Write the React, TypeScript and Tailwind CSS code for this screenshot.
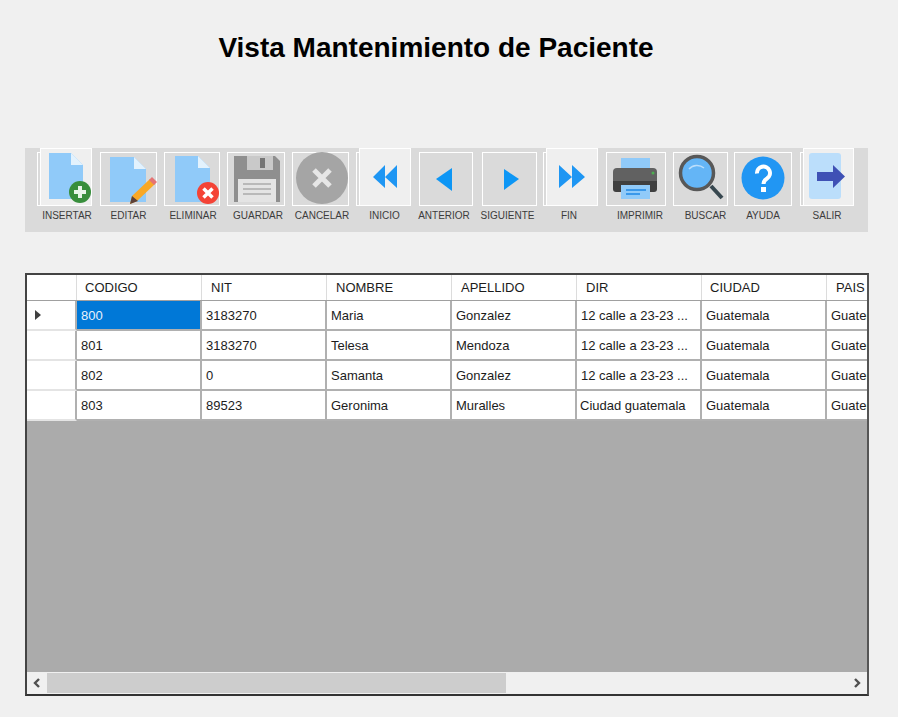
import type { ReactNode } from "react";

type Tool = {
  label: string;
  className: string; // width + gap to the previous button
  view: string; // svg viewBox, same size as the box
  labelClass: string;
  raised?: boolean;
  icon: ReactNode;
};

const DOC_BLUE = "#90caf9";
const FOLD = "#e3f2fd";
const ARROW_BLUE = "#1e96f3";

function Doc({ x, y, w, h }: { x: number; y: number; w: number; h: number }) {
  return (
    <>
      <path d={`M${x} ${y}H${x + w - 12}L${x + w} ${y + 12}V${y + h}H${x}Z`} fill={DOC_BLUE} />
      <path d={`M${x + w - 12} ${y}L${x + w} ${y + 12}H${x + w - 12}Z`} fill={FOLD} />
    </>
  );
}

const TOOLS: Tool[] = [
  {
    label: "INSERTAR",
    className: "w-[55px] ml-[12px]",
    view: "37 152 55 54",
    labelClass: "ml-[5px]",
    raised: true,
    icon: (
      <>
        <Doc x={49} y={153} w={34} h={46} />
        <circle cx={80} cy={192} r={11} fill="#388e3c" />
        <path d="M80 186v12M74 192h12" stroke="#e8f5e9" strokeWidth={4} />
      </>
    ),
  },
  {
    label: "EDITAR",
    className: "w-[57px] ml-[8px]",
    view: "100 152 57 54",
    labelClass: "",
    icon: (
      <>
        <Doc x={110} y={157} w={36} h={45} />
        <path d="M130 204l2-8 18-17 5 5-18 17z" fill="#f9a825" />
        <path d="M149 180l3-3 5 5-3 3z" fill="#e57373" />
        <path d="M130 204l2-8 6 5z" fill="#5d4037" />
      </>
    ),
  },
  {
    label: "ELIMINAR",
    className: "w-[56px] ml-[7px]",
    view: "164 152 56 54",
    labelClass: "ml-[2px]",
    icon: (
      <>
        <Doc x={175} y={156} w={35} h={46} />
        <circle cx={208} cy={193} r={11} fill="#f44336" />
        <path d="M203.500 188.500l9 9M212.500 188.500l-9 9" stroke="#fff" strokeWidth={3.5} />
      </>
    ),
  },
  {
    label: "GUARDAR",
    className: "w-[58px] ml-[7px]",
    view: "227 152 58 54",
    labelClass: "ml-[4px]",
    icon: (
      <>
        <path d="M234 156h41l5 5v41h-46z" fill="#8f8f8f" />
        <rect x={247} y={156} width={26} height={14} fill="#c9c9c9" />
        <rect x={260} y={158} width={5} height={10} fill="#757575" />
        <rect x={238} y={179} width={38} height={23} fill="#e4e4e4" />
        <path d="M243 184h28M243 189h28M243 194h28" stroke="#ababab" strokeWidth={1.5} />
      </>
    ),
  },
  {
    label: "CANCELAR",
    className: "w-[57px] ml-[7px]",
    view: "292 152 57 54",
    labelClass: "ml-[3px]",
    icon: (
      <>
        <circle cx={322} cy={178} r={26} fill="#a5a5a5" />
        <path d="M314 170l16 16M330 170l-16 16" stroke="#e6e6e6" strokeWidth={5} />
      </>
    ),
  },
  {
    label: "INICIO",
    className: "w-[55px] ml-[7px]",
    view: "356 152 55 54",
    labelClass: "-mt-[1px] ml-[2px]",
    raised: true,
    icon: <path d="M373 177l12-12v23zM385 177l12-12v23z" fill={ARROW_BLUE} />,
  },
  {
    label: "ANTERIOR",
    className: "w-[54px] ml-[8px]",
    view: "419 152 54 54",
    labelClass: "-mt-[1px] mr-[4px]",
    icon: <path d="M436 179l16-11v23z" fill="#0d96f5" />,
  },
  {
    label: "SIGUIENTE",
    className: "w-[55px] ml-[9px]",
    view: "482 152 55 54",
    labelClass: "-mt-[1px] mr-[4px]",
    icon: <path d="M504 169l15 10-15 11z" fill="#0d96f5" />,
  },
  {
    label: "FIN",
    className: "w-[55px] ml-[6px]",
    view: "543 152 55 54",
    labelClass: "mr-[3px]",
    raised: true,
    icon: <path d="M559 165l13 12-13 11zM572 165l13 12-13 11z" fill={ARROW_BLUE} />,
  },
  {
    label: "IMPRIMIR",
    className: "w-[60px] ml-[8px]",
    view: "606 152 60 54",
    labelClass: "ml-[8px]",
    icon: (
      <>
        <rect x={621} y={158} width={29} height={12} fill={DOC_BLUE} />
        <path d="M617 168h36a4 4 0 0 1 4 4v9h-44v-9a4 4 0 0 1 4-4z" fill="#616161" />
        <path d="M613 181h44v8a3 3 0 0 1-3 3h-38a3 3 0 0 1-3-3z" fill="#3f3f3f" />
        <circle cx={653} cy={173} r={1.5} fill="#4caf50" />
        <rect x={621} y={185} width={29} height={14} fill={DOC_BLUE} />
        <path d="M626 190h20M626 194h14" stroke="#1e88e5" strokeWidth={1.5} />
      </>
    ),
  },
  {
    label: "BUSCAR",
    className: "w-[55px] ml-[7px]",
    view: "673 152 55 54",
    labelClass: "ml-[10px]",
    icon: (
      <>
        <path d="M711 186l11 12" stroke="#37474f" strokeWidth={4} />
        <circle cx={697} cy={173} r={16.5} fill="#64b5f6" stroke="#585858" strokeWidth={3.5} />
        <path d="M689 169a11 11 0 0 1 15-1" fill="none" stroke="#bbdefb" strokeWidth={1.5} />
      </>
    ),
  },
  {
    label: "AYUDA",
    className: "w-[58px] ml-[6px]",
    view: "734 152 58 54",
    labelClass: "",
    icon: (
      <>
        <circle cx={763} cy={178} r={21.5} fill="#2196f3" />
        <path d="M757 173.500a6.500 6.500 0 1 1 10 5c-2.500 1.500-3.500 2.500-3.500 5.500" fill="none" stroke="#fff" strokeWidth={4} />
        <rect x={761} y={187} width={5} height={5} fill="#fff" />
      </>
    ),
  },
  {
    label: "SALIR",
    className: "w-[54px] ml-[8px]",
    view: "800 152 54 54",
    labelClass: "-mt-[1px]",
    raised: true,
    icon: (
      <>
        <rect x={809} y={153} width={32} height={46} rx={3} fill="#bbdefb" />
        <path d="M817 172h16v-7l12 11.500-12 11.500v-7h-16z" fill="#3f51b5" />
      </>
    ),
  },
];

const COLUMNS = [
  { name: "CODIGO", pad: "pl-[8px]" },
  { name: "NIT", pad: "pl-[9px]" },
  { name: "NOMBRE", pad: "pl-[9px]" },
  { name: "APELLIDO", pad: "pl-[9px]" },
  { name: "DIR", pad: "pl-[9px]" },
  { name: "CIUDAD", pad: "pl-[8px]" },
  { name: "PAIS", pad: "pl-[9px]" },
];

const ROWS = [
  ["800", "3183270", "Maria", "Gonzalez", "12 calle a 23-23 ...", "Guatemala", "Guatemala"],
  ["801", "3183270", "Telesa", "Mendoza", "12 calle a 23-23 ...", "Guatemala", "Guatemala"],
  ["802", "0", "Samanta", "Gonzalez", "12 calle a 23-23 ...", "Guatemala", "Guatemala"],
  ["803", "89523", "Geronima", "Muralles", "Ciudad guatemala", "Guatemala", "Guatemala"],
];

function ToolButton({ tool }: { tool: Tool }) {
  return (
    <div className={`${tool.className} shrink-0 flex flex-col items-center`}>
      <div className="relative w-full h-[54px] border border-white">
        {tool.raised && (
          <div className="absolute -top-[5px] left-[2px] -right-[1px] -bottom-[1px] bg-[#efefef] border border-white" />
        )}
        <svg
          viewBox={tool.view}
          className="absolute -top-[1px] -left-[1px] w-[calc(100%+2px)] h-[calc(100%+2px)] overflow-visible"
        >
          {tool.icon}
        </svg>
      </div>
      <span
        className={`${tool.labelClass} mt-[4px] text-[10px] leading-[12px] whitespace-nowrap text-[#3c3c3c]`}
      >
        {tool.label}
      </span>
    </div>
  );
}

export default function App() {
  return (
    <div className="w-[898px] h-[717px] overflow-hidden bg-[#f0f0f0] font-['Liberation_Sans',Arial,sans-serif] text-[#1c1c1c]">
      <h1 className="pt-[31px] pr-[26px] h-[148px] text-center text-[28px] leading-[34px] font-bold text-black">
        Vista Mantenimiento de Paciente
      </h1>

      <div className="ml-[25px] w-[843px] h-[84px] pt-[4px] bg-[#dadada] flex">
        {TOOLS.map((tool) => (
          <ToolButton key={tool.label} tool={tool} />
        ))}
      </div>

      <div className="ml-[25px] mt-[41px] w-[844px] h-[423px] border-2 border-t-[#444] border-l-[#444] border-r-[#555] border-b-[#333] flex flex-col bg-[#ababab]">
        <div className="flex h-[26px] shrink-0 bg-white border-b border-[#a0a0a0] text-[13px] leading-[25px] overflow-hidden">
          <div className="w-[50px] shrink-0 border-r border-[#dcdcdc]" />
          {COLUMNS.map((col) => (
            <div key={col.name} className={`w-[125px] shrink-0 ${col.pad} border-r border-[#dcdcdc]`}>
              {col.name}
            </div>
          ))}
        </div>

        {ROWS.map((row, i) => (
          <div key={row[0]} className="flex h-[30px] shrink-0 bg-white text-[13px] leading-[30px] overflow-hidden">
            <div className="w-[50px] shrink-0 border-r-2 border-r-[#b0b0b0] border-b-2 border-b-[#e4e4e4] flex items-center">
              {i === 0 && <div className="ml-[8px] border-y-[5px] border-y-transparent border-l-[6px] border-l-[#404040]" />}
            </div>
            {row.map((cell, j) => (
              <div
                key={j}
                className={`w-[125px] shrink-0 whitespace-nowrap overflow-hidden border-r-2 border-b-2 border-[#b0b0b0] ${
                  cell === "Ciudad guatemala" ? "pl-[3px]" : "pl-[4px]"
                } ${i === 0 && j === 0 ? "bg-[#0078d7] text-[#e8f1fb]" : ""}`}
              >
                {cell}
              </div>
            ))}
          </div>
        ))}

        <div className="flex-1" />

        <div className="h-[22px] shrink-0 bg-[#f0f0f0] flex items-center">
          <svg viewBox="0 0 10 10" className="w-[10px] h-[10px] ml-[5px] shrink-0">
            <path d="M7 1L3 5l4 4" fill="none" stroke="#505050" strokeWidth={2.4} />
          </svg>
          <div className="ml-[5px] w-[459px] h-[20px] bg-[#cdcdcd]" />
          <div className="flex-1" />
          <svg viewBox="0 0 10 10" className="w-[10px] h-[10px] mr-[5px] shrink-0">
            <path d="M3 1l4 4-4 4" fill="none" stroke="#505050" strokeWidth={2.4} />
          </svg>
        </div>
      </div>
    </div>
  );
}
